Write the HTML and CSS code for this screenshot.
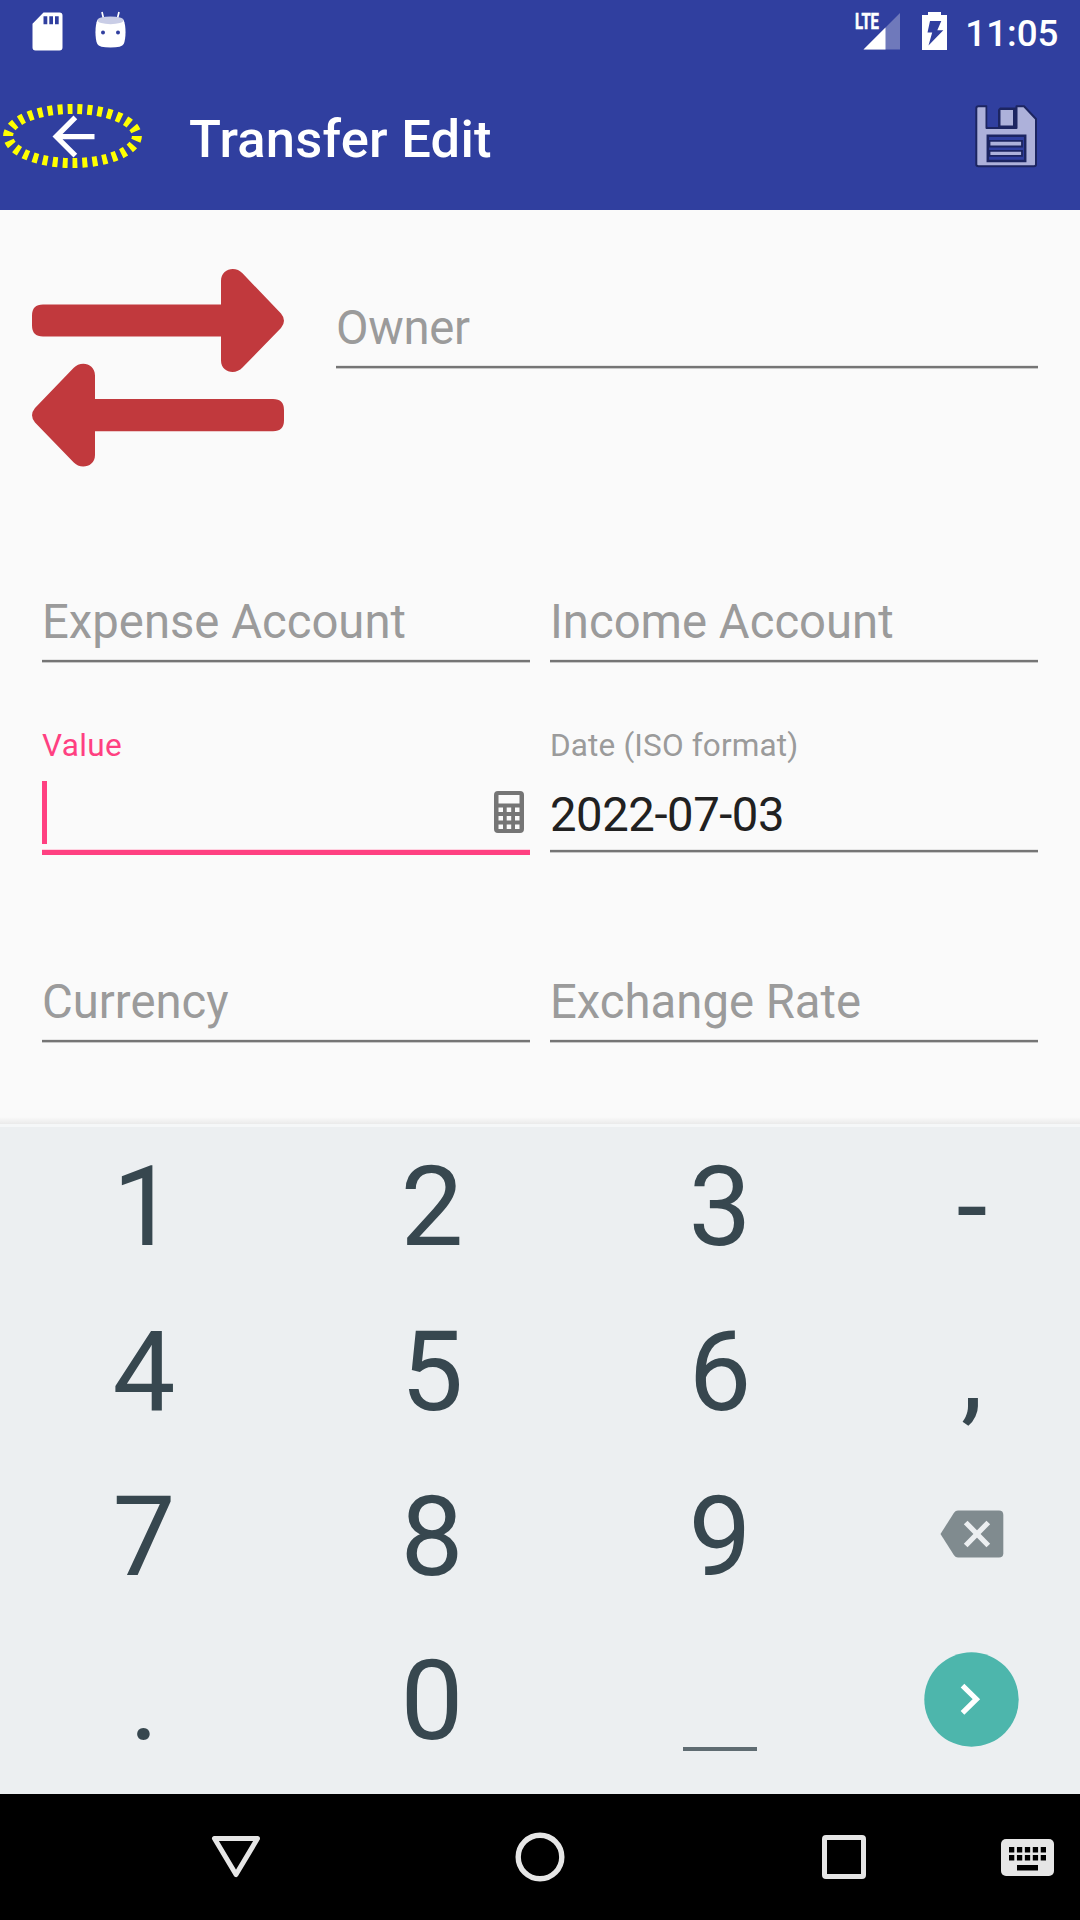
FILE: index.html
```html
<!DOCTYPE html>
<html lang="en">
<head>
<meta charset="utf-8">
<title>Transfer Edit</title>
<link rel="stylesheet" href="styles.css">
</head>
<body>
<header class="header">
  <div class="status">
    <svg class="status-sd" width="31" height="39" viewBox="0 0 31 39"><path fill="#fff" fill-rule="evenodd" d="M11.5.5H27.500Q30.500.5 30.500 3.500V35.500Q30.500 38.500 27.500 38.500H3.500Q.5 38.500.5 35.500V11.800ZM11.500 4.200V12.200H15.300V4.200ZM17.300 4.200V12.200H21V4.200ZM23 4.200V12.200H26.700V4.200Z"/></svg>
    <svg class="status-droid" width="32" height="38" viewBox="0 0 32 38">
      <path d="M8 1L9.600 8M25 1L23.300 8" stroke="#fff" stroke-width="1.700"/>
      <path fill="#fff" d="M3.400 9C1 14 .7 27 3.300 33Q5 36.500 16.500 36.500T29.700 33C32.300 27 32 14 29.600 9Z"/>
      <ellipse cx="16.500" cy="9.300" rx="13.200" ry="3.900" fill="#c9cde6"/>
      <circle cx="9" cy="21.500" r="2" fill="#303f9f"/><circle cx="24" cy="21.500" r="2" fill="#303f9f"/>
    </svg>
    <svg class="status-signal" width="48" height="50" viewBox="0 -12 48 50">
      <path fill="#6f79bb" d="M45 1V37.500H8.500Z"/><path fill="#fff" d="M30.500 15.500V37.500H8.500Z"/>
      <text class="lte" x="0" y="17.300" textLength="24" lengthAdjust="spacingAndGlyphs">LTE</text>
    </svg>
    <svg class="status-battery" width="25" height="38" viewBox="0 0 25 38"><path fill="#fff" fill-rule="evenodd" d="M6 0H19V3H25V38H0V3H6ZM8 9L5.500 20.500H10.200L6.500 33.500L21.300 18.200H15.300L19.300 9Z"/></svg>
    <span class="clock">11:05</span>
  </div>
  <div class="appbar">
    <svg class="back" width="63" height="63" viewBox="0 0 24 24"><path fill="#fff" d="M20 11H7.830l5.590-5.590L12 4l-8 8 8 8 1.410-1.410L7.830 13H20v-2z"/></svg>
    <svg class="focus-ring" width="146" height="70" viewBox="0 0 146 70"><ellipse cx="72.500" cy="35" rx="64.400" ry="27" fill="none" stroke="#ff0" stroke-width="10" stroke-dasharray="5 5" pathLength="300"/></svg>
    <h1 class="title">Transfer Edit</h1>
    <svg class="save" width="64" height="65" viewBox="0 0 64 65">
      <path fill="#adb1da" stroke="#1c2561" stroke-width="2" stroke-linejoin="round" d="M4.500 2.200H12.500V24H42.500V2.200H50L62 15V60.500Q62 62.300 60 62.300H4.500Q2.300 62.300 2.300 60.500V4.500Q2.300 2.200 4.500 2.200Z"/>
      <path fill="#1c2561" d="M26 3.500H42V23.500H24V5.500Z"/><path fill="#303f9f" d="M13.500 1H24V22.500H13.500Z"/>
      <path fill="#adb1da" d="M26.500 6H39V21.500H26.500Z"/>
      <path fill="#303f9f" stroke="#1c2561" stroke-width="2.500" d="M13.800 31.800H51.200V57H13.800Z"/>
      <path fill="#adb1da" stroke="#1c2561" stroke-width="1.800" d="M15.500 36.800H48V42.500H15.500ZM15.500 46.800H48V51.800H15.500Z"/>
    </svg>
  </div>
</header>

<main class="form">
  <section class="hero">
    <svg class="transfer" width="252" height="198" viewBox="0 0 252 198" fill="#c1393d">
      <path d="M11 35.500H189V12C189-.5 203.500-3.500 210.500 4.300L249 44.500Q255 51.700 249 59L210.500 98.500C203.500 106.500 189 103.500 189 91.500V67.500H11Q0 67.500 0 56.500V46.500Q0 35.500 11 35.500Z"/>
      <path d="M241 130.100H63V106.500C63 94 48.500 91.300 41.500 98.900L3 139Q-3 146.300 3 153.500L41.500 193.300C48.500 201 63 198 63 186V162.300H241Q252 162.300 252 151.300V141.100Q252 130.100 241 130.100Z"/>
    </svg>
    <div class="field owner"><span class="hint">Owner</span><i class="rule"></i></div>
  </section>
  <section class="fields">
    <div class="field"><span class="hint">Expense Account</span><i class="rule"></i></div>
    <div class="field"><span class="hint">Income Account</span><i class="rule"></i></div>
    <div class="field filled active">
      <span class="label">Value</span>
      <div class="entry"><i class="caret"></i>
        <svg class="calc" width="30" height="42" viewBox="0 0 30 42"><path fill="#757575" fill-rule="evenodd" d="M4 0H26Q30 0 30 4V38Q30 42 26 42H4Q0 42 0 38V4Q0 0 4 0ZM4.500 4V12.500H25.500V4ZM4.500 16.500V21H9V16.500ZM12.700 16.500V21H17.200V16.500ZM21 16.500V21H25.500V16.500ZM4.500 25V29.500H9V25ZM12.700 25V29.500H17.200V25ZM21 25V29.500H25.500V25ZM4.500 33.500V38H9V33.500ZM12.700 33.500V38H17.200V33.500ZM21 33.500V38H25.500V33.500Z"/></svg>
      </div><i class="rule"></i>
    </div>
    <div class="field filled">
      <span class="label">Date (ISO format)</span>
      <div class="entry">2022-07-03</div><i class="rule"></i>
    </div>
    <div class="field"><span class="hint">Currency</span><i class="rule"></i></div>
    <div class="field"><span class="hint">Exchange Rate</span><i class="rule"></i></div>
  </section>
  <div class="shade"></div>
</main>

<section class="keyboard">
  <span class="key">1</span><span class="key">2</span><span class="key">3</span><span class="key">-</span>
  <span class="key">4</span><span class="key">5</span><span class="key">6</span><span class="key">,</span>
  <span class="key">7</span><span class="key">8</span><span class="key">9</span>
  <span class="key"><svg class="backspace" width="64" height="48" viewBox="0 0 64 48"><path fill="#808b8f" d="M18 .5H59Q63.300.5 63.300 4.800V43.200Q63.300 47.500 59 47.500H18Q15.500 47.500 14 45.300L.5 24L14 2.700Q15.500.5 18 .5Z"/><path d="M25.700 12.500L48.300 35.500M48.300 12.500L25.700 35.500" stroke="#eceff1" stroke-width="5.200"/></svg></span>
  <span class="key">.</span><span class="key">0</span>
  <span class="key"><i class="space"></i></span>
  <span class="key"><svg class="next" width="95" height="95" viewBox="0 0 95 95"><circle cx="47.500" cy="47.500" r="47.200" fill="#4db6ac"/><path d="M38.500 33.600L52.400 47.200L38.500 60.800" fill="none" stroke="#fff" stroke-width="5.200"/></svg></span>
</section>

<nav class="navbar">
  <svg class="nav-back" width="50" height="44" viewBox="0 0 50 44"><path d="M3.500 3.500H46.500L25 39.500Z" fill="none" stroke="#e6e6e6" stroke-width="5" stroke-linejoin="round"/></svg>
  <svg class="nav-home" width="50" height="50" viewBox="0 0 50 50"><circle cx="25" cy="25" r="21.800" fill="none" stroke="#e6e6e6" stroke-width="5.400"/></svg>
  <svg class="nav-recent" width="44" height="44" viewBox="0 0 44 44"><rect x="2.500" y="2.500" width="39" height="39" rx="1.500" fill="none" stroke="#e6e6e6" stroke-width="5"/></svg>
  <svg class="nav-ime" width="53" height="37" viewBox="0 0 53 37"><rect width="53" height="37" rx="5" fill="#e6e6e6"/><path d="M8 10.700H45M8 18.700H45" stroke="#000" stroke-width="5.400" stroke-dasharray="5.300 2.630"/><path d="M16 26H37V31.500H16Z"/></svg>
</nav>
</body>
</html>
```
FILE: styles.css
```css
* { box-sizing: border-box; }
body {
  margin: 0;
  width: 1080px;
  height: 1920px;
  display: flex;
  flex-direction: column;
  overflow: hidden;
  background: #fafafa;
  font-family: Roboto, "Liberation Sans", sans-serif;
}
svg, i { display: block; flex: none; }

.header { height: 210px; background: #303f9f; color: #fff; }
.status { height: 63px; display: flex; align-items: flex-start; padding: 12px 21.5px 0 32px; }
.status-droid { margin: -1px 0 0 31px; }
.status-signal { margin: -12px 0 0 auto; }
.status-battery { margin-left: 19px; }
.lte { font-size: 22.5px; font-weight: 700; fill: #fff; stroke: #fff; stroke-width: 0.6px; }
.clock { margin-left: 18px; font-size: 36.75px; font-weight: 500; line-height: 43px; }
.appbar { position: relative; height: 147px; display: flex; align-items: center; padding: 0 42px; }
.focus-ring { position: absolute; left: 0; top: 38px; }
.title { margin: 0 auto 0 84px; padding-top: 5px; font-size: 52.5px; font-weight: 500; line-height: 62px; letter-spacing: 0.24px; }

.form { height: 914px; padding: 0 42px; display: flex; flex-direction: column; }
.hero { height: 384px; display: flex; align-items: flex-start; gap: 52px; }
.transfer { margin: 59px 0 0 -10px; }
.field { display: flex; flex-direction: column; font-size: 47.25px; line-height: 56px; }
.owner { width: 702px; padding-top: 90px; }
.owner .hint { letter-spacing: -0.3px; }
.hint, .label { color: #9b9b9b; }
.rule { height: 2px; margin-top: 10px; background: #757575; box-shadow: 0 -1px #e6e6e6, 0 1px #c8c8c8; }
.fields {
  display: grid;
  grid-template-columns: 488px 488px;
  grid-template-rows: 132px 248px 68px;
  column-gap: 20px;
}
.label { padding-top: 1px; font-size: 31.5px; line-height: 38px; letter-spacing: 0.15px; }
.entry { height: 56px; margin-top: 22px; display: flex; color: #212121; letter-spacing: -0.45px; }
.filled .rule { margin-top: 7px; }
.active .label { color: #ff4081; letter-spacing: 0.35px; }
.active .entry { justify-content: space-between; padding-right: 6px; }
.active .rule { height: 5px; background: #ff4081; box-shadow: 0 -1px #ffd0df; }
.caret { width: 5px; height: 63px; margin-top: -6px; background: #ff4081; }
.calc { margin-top: 4px; }
.shade { height: 7px; margin: auto -42px 0; background: linear-gradient(#fafafa, #eaeaea); }

.keyboard {
  height: 670px;
  display: grid;
  grid-template-columns: 288px 288px 288px 216px;
  grid-template-rows: repeat(4, 164.75px);
  background: linear-gradient(#f5f7f8 3px, #eceff1 3px);
  color: #37474f;
  font-size: 112px;
  line-height: 165px;
}
.key { display: flex; justify-content: center; }
.backspace { margin: 56.5px 1px 0 0; }
.space { width: 74px; height: 4px; margin-top: 129px; background: #5f6c72; }
.next { margin: 34px 0.5px 0 0; }

.navbar { height: 126px; display: flex; align-items: center; padding: 0 26px 0 211px; background: #000; }
.nav-home { margin-left: 254px; }
.nav-recent { margin-left: 257px; }
.nav-ime { margin: 1px 0 0 auto; }
```
